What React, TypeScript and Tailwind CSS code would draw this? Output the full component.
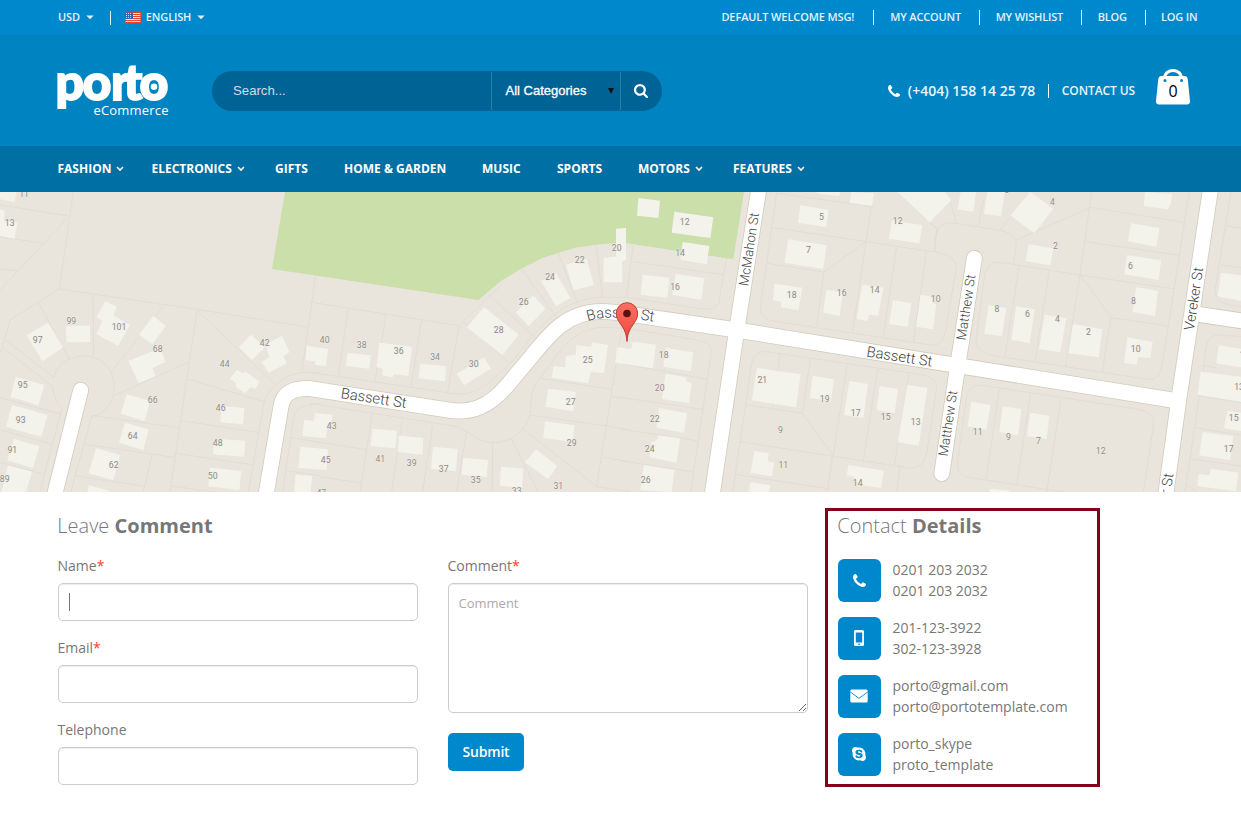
import React from "react";
import { FaSkype } from "react-icons/fa";

type MapLabel = [string, number, number];
type Tile = { x: number; lots: string[]; buildings: string[]; labels: MapLabel[] };

// Every tile is drawn at three times its size on the page.
const tiles: Tile[] = [
  {
    x: 0,
    lots: [
      "M0,45 L205,78", "M220,6 L178,297 L30,390 L14,448 L0,490", "M178,297 L592,358 L922,411", "M0,300 L205,82",
      "M0,140 L130,160", "M0,237 L52,243", "M117,340 L208,508", "M279,312 L281,500", "M490,348 L335,545",
      "M592,358 L568,515 L510,906", "M568,515 L342,617", "M592,362 L825,583", "M562,567 L792,635", "M947,258 L905,545",
      "M14,448 L162,563", "M8,472 L158,590",
      "M162,563 C170,520 210,498 256,498 C310,500 343,545 343,590 C343,640 310,675 275,680 L225,860 L212,906",
      "M158,590 C162,625 172,640 185,658 L150,790 L120,906", "M0,623 L182,672", "M0,720 L155,762", "M0,817 L130,852",
      "M275,676 L535,713", "M255,763 L523,802", "M228,858 L430,888", "M456,795 L430,906", "M543,692 L778,728",
      "M527,790 L762,825", "M513,888 L745,920", "M960,547 L905,547 C850,555 800,600 792,640 L745,906",
      "M960,640 L925,645 C890,650 885,670 880,690 L848,906", "M872,743 L960,757", "M866,843 L960,857",
    ],
    buildings: [
      "0,6 50,6 44,36 0,28", "0,58 14,62 12,92 52,98 44,146 0,138", "80,436 144,398 190,472 128,514",
      "198,408 270,407 271,456 199,457", "316,334 351,350 339,376 389,404 355,468 289,432 307,394 290,380",
      "460,378 498,408 457,462 417,434", "385,513 455,485 484,480 496,516 457,534 467,558 416,580",
      "47,561 133,585 115,646 32,621", "36,645 142,675 124,740 18,710", "42,747 118,769 99,834 22,811",
      "24,826 96,845 78,906 4,906", "380,613 450,633 434,693 362,671", "375,698 446,718 430,780 357,758",
      "288,775 361,795 340,870 266,850", "267,886 328,902 326,906 262,906", "753,434 795,472 756,510 717,472",
      "797,464 846,437 868,487 850,498 861,520 806,548 785,516 808,502",
      "710,540 728,550 736,545 778,574 766,597 752,592 735,610 707,590 708,578 690,566",
      "664,648 733,654 729,703 661,697", "643,746 736,752 732,800 639,793", "630,833 724,843 718,901 625,889",
      "920,467 984,477 978,529 945,524 946,514 917,511",
      "945,669 998,675 992,700 982,702 978,745 908,738 912,690 942,693", "901,770 984,778 980,840 895,834",
      "887,854 936,858 932,906 882,906",
    ],
    labels: [
      ["11", 72, 11], ["13", 29, 100], ["99", 214, 394], ["97", 113, 451], ["101", 357, 411], ["68", 473, 478],
      ["44", 674, 522], ["42", 794, 460], ["95", 68, 586], ["93", 62, 691], ["91", 37, 781], ["89", 14, 868],
      ["66", 458, 631], ["64", 398, 739], ["62", 341, 826], ["46", 662, 655], ["48", 653, 760], ["50", 638, 859],
    ],
  },
  {
    x: 310,
    lots: [
      "M5,337 L447,407 L412,610", "M115,355 L85,558", "M228,373 L195,575", "M335,388 L303,592", "M447,407 L575,283",
      "M462,397 L598,520", "M543,320 L670,438", "M635,237 L738,380", "M745,190 L803,340", "M858,166 L878,322",
      "M0,547 L440,612 C500,615 540,580 600,520 C680,430 730,330 875,322 L950,322",
      "M0,640 L430,708 C480,720 500,757 548,758 C600,757 645,730 660,670 C665,620 660,600 690,565 C740,500 780,415 880,412 L945,415",
      "M690,565 L905,598", "M935,415 L860,890", "M660,675 L890,708 L960,720", "M905,620 L960,626",
      "M640,718 L860,890 L960,905", "M603,745 L685,906", "M548,758 L547,906", "M470,722 L440,906", "M368,705 L338,906",
      "M277,688 L245,906", "M187,672 L150,906", "M30,757 L168,779", "M30,860 L152,879", "M878,802 L960,815",
    ],
    buildings: [
      "112,488 182,496 178,536 107,527", "208,458 306,470 295,558 251,552 248,562 216,556 218,536 200,532",
      "330,521 408,529 405,574 326,565", "440,551 523,502 542,536 462,586", "522,352 626,434 577,496 471,412",
      "670,316 706,356 656,408 617,368", "693,274 738,250 782,324 738,348", "768,224 830,206 852,284 790,301",
      "918,116 948,114 948,210 936,214 937,277 881,277 881,203 918,200",
      "846,457 894,465 882,549 842,546 835,580 725,563 731,529 766,532 768,497 797,494 799,466 844,470",
      "714,596 797,606 790,664 707,650", "705,694 793,706 789,756 700,744", "678,778 742,829 714,868 645,817",
      "187,716 261,723 256,775 182,768", "267,737 340,744 337,794 263,786", "369,770 443,777 438,844 363,836",
      "459,803 534,810 530,861 455,854", "573,830 640,836 636,893 569,887",
    ],
    labels: [
      ["40", 44, 450], ["38", 155, 465], ["36", 266, 484], ["34", 375, 501], ["30", 491, 522], ["28", 566, 420],
      ["26", 641, 336], ["24", 720, 261], ["22", 809, 210], ["20", 920, 175], ["25", 833, 510], ["27", 782, 636],
      ["29", 785, 760], ["31", 745, 888], ["33", 620, 904], ["35", 497, 870], ["37", 401, 837], ["39", 305, 820],
      ["41", 211, 807], ["45", 47, 811], ["43", 65, 709], ["47", 34, 908],
    ],
  },
  {
    x: 620,
    lots: [
      "M470,6 L421,350 C425,385 440,390 465,394 L900,460 L930,465", "M455,112 L738,155 L930,184",
      "M755,45 L738,155 L612,246 L440,220", "M612,246 L590,410", "M470,10 L760,50", "M738,155 L697,430",
      "M830,168 L790,440", "M920,182 L880,455", "M930,100 L950,115 L945,185",
      "M39,167 L20,322 L240,356 C290,362 298,350 302,300 L320,205", "M39,215 L310,254",
      "M0,412 L220,448 C270,455 278,470 272,500 L212,906", "M0,520 L263,568", "M0,622 L247,658", "M0,717 L232,752",
      "M0,812 L217,845",
      "M338,906 L395,520 C405,485 420,480 460,488 L900,553 C945,560 955,580 948,610 L920,790 C910,830 890,838 860,833 L358,755",
      "M380,645 L547,670 L638,795 L622,906", "M480,492 L458,655", "M572,503 L547,670", "M682,520 L640,795",
      "M773,537 L730,812", "M867,550 L823,825", "M345,853 L630,897", "M840,830 L830,906",
    ],
    buildings: [
      "38,455 108,464 99,535 -14,518 -9,472 34,477", "55,24 120,32 115,84 51,77", "163,65 280,82 271,144 155,128",
      "188,156 268,168 260,223 181,209", "68,254 148,263 142,323 62,314", "168,252 253,265 244,330 157,314",
      "137,474 220,487 212,544 130,530", "137,551 199,562 198,574 215,579 207,640 126,627",
      "117,655 201,669 192,728 109,713", "116,736 180,745 170,818 88,802 94,756 110,752",
      "72,825 163,840 155,906 61,900", "585,6 660,6 657,18 600,12", "694,6 762,10 756,48 689,38",
      "541,46 625,59 619,111 534,98", "504,148 620,166 609,237 494,218",
      "463,281 547,293 535,361 483,352 484,336 459,330", "619,299 669,307 659,378 610,368",
      "727,284 790,293 775,377 747,374 742,393 710,387", "818,331 874,339 863,410 808,402",
      "902,314 935,320 937,340 949,342 939,418 888,410", "815,92 907,105 898,160 807,146",
      "833,6 975,6 994,30 929,97", "411,534 542,553 528,652 395,631", "578,558 642,568 633,633 569,624",
      "688,573 744,582 730,684 672,675", "779,588 834,597 824,670 770,661", "862,584 922,594 896,767 833,756",
      "403,784 446,789 443,814 463,818 456,859 392,849", "391,876 451,886 448,906 387,906",
      "685,825 791,842 783,894 718,884 700,860 681,856",
    ],
    labels: [
      ["12", 194, 97], ["14", 180, 190], ["16", 165, 291], ["18", 131, 495], ["20", 119, 594], ["22", 104, 687],
      ["24", 89, 777], ["26", 77, 871], ["21", 427, 570], ["19", 614, 627], ["17", 707, 670], ["15", 797, 681],
      ["13", 887, 696], ["9", 481, 720], ["11", 490, 825], ["14", 713, 880], ["5", 604, 82], ["7", 565, 180],
      ["18", 515, 316], ["16", 665, 309], ["14", 764, 300], ["10", 947, 327], ["12", 833, 94],
    ],
  },
  {
    x: 930,
    lots: [
      "M485,6 L450,255 L543,380 L517,545", "M260,150 L482,52 L762,97", "M208,122 L242,80", "M62,40 L80,100",
      "M160,30 L145,110",
      "M778,6 L697,520 C690,560 680,572 640,566 L200,498 C150,490 135,470 138,450 L165,250 C175,215 190,215 230,220 L450,255 L735,297",
      "M467,155 L748,196", "M543,383 L715,408", "M267,228 L225,500", "M358,240 L315,515", "M450,255 L407,530",
      "M14,180 L15,150 C25,100 40,97 75,100 L205,120 C255,130 262,150 257,180 L250,220", "M0,95 L22,118",
      "M0,183 C50,190 80,200 78,240 L50,400 C45,440 40,468 0,466",
      "M400,906 L147,867 C115,862 78,860 82,820 L110,620 C120,585 140,583 170,588 L620,657 C660,665 675,680 670,710 L640,906",
      "M208,598 L168,868", "M302,610 L260,885", "M393,625 L350,906", "M903,6 L855,300 C860,340 880,342 933,350",
      "M890,108 L933,114", "M872,225 L933,233", "M933,440 L860,435 C825,440 828,480 820,540 L765,906",
      "M820,527 L860,533", "M805,618 L933,638", "M792,713 L933,735", "M778,806 L933,828", "M768,882 L800,906",
    ],
    buildings: [
      "92,6 138,6 130,66 83,58", "172,6 224,6 213,79 162,71", "301,6 370,56 313,130 242,76",
      "296,163 370,175 361,226 287,213", "645,6 727,12 721,46 713,58 641,48", "603,100 688,114 679,170 594,154",
      "591,196 693,211 686,270 583,253", "619,292 684,303 675,378 608,366",
      "592,442 668,456 661,504 625,501 619,524 582,519", "176,346 229,354 216,439 163,431",
      "259,349 314,358 299,459 244,450", "344,374 409,385 391,487 327,477", "429,402 517,418 506,502 415,489",
      "124,635 182,645 169,719 113,709", "218,649 274,657 264,736 208,726", "301,668 358,677 350,747 291,738",
      "873,248 933,256 933,332 863,319", "866,466 933,476 933,532 859,520", "812,545 933,560 933,635 803,614",
      "893,662 933,668 933,723 882,715", "818,726 909,739 901,811 808,796",
      "843,836 925,848 918,904 802,888 806,852 838,856", "178,896 240,902 240,906 178,906",
    ],
    labels: [
      ["4", 367, 37], ["2", 376, 168], ["6", 601, 229], ["8", 610, 333], ["10", 617, 477], ["8", 201, 358],
      ["6", 292, 373], ["4", 382, 388], ["2", 475, 427], ["11", 143, 726], ["9", 235, 741], ["7", 325, 753],
      ["12", 512, 783], ["15", 911, 685], ["17", 896, 777], ["13", 927, 591], ["11", 943, 496], ["6", 230, 0],
    ],
  },
];

const roads = [
  "M265.8,496 L281.2,405 C283.5,393.5 293,387.5 310,388.6 L448,410 C472,414 490,406 508,384.5 L531,357 C549,335 566,312 601,311.5 C613,311.5 625,313.3 637.3,315.3 L736.7,330 L1175,400.5",
  "M759,188 L736.7,330 L712,496",
  "M974.3,258.3 L957.7,366 L941.8,473.5",
  "M1210.7,188 L1179.3,396 L1165.5,496",
  "M1194,313.7 L1246,321.5",
  "M80.7,390.2 L54.3,496",
];

const streetLabels: { text: string; x: number; y: number; angle: number; size: number; anchor: "middle" | "end" }[] = [
  { text: "Bassett St", x: 373, y: 403, angle: 8.5, size: 14.8, anchor: "middle" },
  { text: "Bassett St", x: 898.8, y: 361.5, angle: 8.8, size: 14.8, anchor: "middle" },
  { text: "McMahon St", x: 753.5, y: 250, angle: -81.5, size: 13.2, anchor: "middle" },
  { text: "Matthew St", x: 970.5, y: 308, angle: -81.5, size: 13.2, anchor: "middle" },
  { text: "Matthew St", x: 952.5, y: 424, angle: -81.5, size: 13.2, anchor: "middle" },
  { text: "Vereker St", x: 1198.5, y: 299.5, angle: -81.5, size: 14.3, anchor: "middle" },
  { text: "Vereker St", x: 1173.5, y: 474, angle: -81.5, size: 14.3, anchor: "end" },
];

function StreetMap() {
  return (
    <svg viewBox="0 192 1241 300" className="block h-[300px] w-[1241px] bg-[#e9e5dc]" style={{ fontFamily: "Roboto, sans-serif" }}>
      <polygon
        points="285,192 272,269 478.3,300 501.7,280.5 521.7,268.5 543,257.8 575,247.8 601.7,244 620,243.2 627,243.3 733.3,259.3 744,192"
        fill="#cadfaa"
      />
      {tiles.map((t) => (
        <g key={t.x} transform={`translate(${t.x} 190) scale(0.33333)`}>
          {t.lots.map((d, i) => (
            <path key={i} d={d} fill="none" stroke="#e1dcd4" strokeWidth={2.8} />
          ))}
        </g>
      ))}
      {tiles.map((t) => (
        <g key={t.x} transform={`translate(${t.x} 190) scale(0.33333)`} fill="#f3f3ec">
          {t.buildings.map((p, i) => (
            <polygon key={i} points={p} />
          ))}
        </g>
      ))}
      <g fill="none" strokeLinecap="round" strokeLinejoin="round">
        {roads.map((d) => (
          <path key={d} d={d} stroke="#d3cbbd" strokeWidth={16.6} />
        ))}
        {roads.map((d) => (
          <path key={d} d={d} stroke="#ffffff" strokeWidth={15} />
        ))}
      </g>
      {tiles.map((t) => (
        <g
          key={t.x}
          transform={`translate(${t.x} 190) scale(0.33333)`}
          fill="#8f8c88"
          fontSize={26}
          textAnchor="middle"
          stroke="#f0ede6"
          strokeWidth={3}
          paintOrder="stroke"
        >
          {t.labels.map(([n, x, y], i) => (
            <text key={i} x={x} y={y + 9}>
              {n}
            </text>
          ))}
        </g>
      ))}
      <g fill="#444444" fontWeight={300}>
        {streetLabels.map((s, i) => (
          <text key={i} fontSize={s.size} textAnchor={s.anchor} transform={`translate(${s.x} ${s.y}) rotate(${s.angle})`}>
            {s.text}
          </text>
        ))}
        <path id="bend" d="M588,321 C606,315 632,317 665,324" fill="none" />
        <text fontSize={14.8}>
          <textPath href="#bend">Bassett St</textPath>
        </text>
      </g>
      <defs>
        <linearGradient id="pin" x1="0" y1="0" x2="0" y2="1">
          <stop offset="0" stopColor="#fb7064" />
          <stop offset="1" stopColor="#f0453a" />
        </linearGradient>
      </defs>
      <path
        d="M627,341.5 C626.3,331 622.5,327 619.5,322.5 C617.5,319.5 616.3,317 616.3,313.4 A10.7,10.7 0 0 1 637.7,313.4 C637.7,317 636.5,319.5 634.5,322.5 C631.5,327 627.7,331 627,341.5 Z"
        fill="url(#pin)"
        stroke="#b0352d"
        strokeWidth={0.9}
      />
      <circle cx={627} cy={313.5} r={3.8} fill="#5c120e" />
    </svg>
  );
}

const phonePath =
  "M1600 1240q0 27-10 70.5t-21 68.5q-21 50-122 106-94 51-186 51-27 0-53-3.5t-57.5-12.5-47-14.5-55.5-20.5-49-18q-98-35-175-83-127-79-264-216t-216-264q-48-77-83-175-3-9-18-49t-20.5-55.5-14.5-47-12.5-57.5-3.5-53q0-92 51-186 56-101 106-122 25-11 68.5-21t70.5-10q14 0 21 3 18 6 53 76 11 19 30 54t35 63.5 31 53.5q3 4 17.5 25t21.5 35.5 7 28.5q0 20-28.5 50t-62 55-62 53-28.5 46q0 9 5 22.5t8.5 20.5 14 24 11.5 19q76 137 174 235t235 174q2 1 19 11.5t24 14 20.5 8.5 22.5 5q18 0 46-28.5t53-62 55-62 50-28.5q14 0 28.5 7t35.5 21.5 25 17.5q25 15 53.5 31t63.5 35 54 30q70 35 76 53 3 7 3 21z";
const searchPath =
  "M1216 832q0-185-131.5-316.5t-316.5-131.5-316.5 131.5-131.5 316.5 131.5 316.5 316.5 131.5 316.5-131.5 131.5-316.5zm512 832q0 52-38 90t-90 38q-54 0-90-38l-343-342q-179 124-399 124-143 0-273.5-55.5t-225-150-150-225-55.5-273.5 55.5-273.5 150-225 225-150 273.5-55.5 273.5 55.5 225 150 150 225 55.5 273.5q0 220-124 399l343 343q37 37 37 90z";

function PhoneIcon({ className }: { className: string }) {
  return (
    <svg viewBox="192 128 1408 1408" className={className} fill="currentColor">
      <path d={phonePath} />
    </svg>
  );
}

function Caret() {
  return (
    <svg viewBox="0 0 8 5" className="h-[5px] w-2" fill="currentColor">
      <path d="M0.3 0.4h7.4L4 4.3z" />
    </svg>
  );
}

function Flag() {
  return (
    <svg viewBox="0 0 16 11" className="h-[11px] w-4">
      <rect width="16" height="11" fill="#f7dcd6" />
      {[0, 2, 4, 6, 8, 10].map((y) => (
        <rect key={y} y={y} width="16" height="1" fill="#e8442e" />
      ))}
      <rect width="8" height="7" fill="#2f62c4" />
      {[1.5, 3.5, 5.5].map((y) => (
        <path key={y} d={`M1 ${y}h6`} stroke="#dce6fa" strokeWidth="0.9" strokeDasharray="1 1" />
      ))}
      <rect x="0.5" y="0.5" width="15" height="10" fill="none" stroke="#d8402d" strokeOpacity="0.6" />
    </svg>
  );
}

function Logo() {
  return (
    <svg viewBox="0 0 114 54" className="h-[54px] w-[114px] shrink-0 overflow-visible" fill="#ffffff">
      <text
        x="-2.5 24.5 53 65.500 81.500"
        y="35.500"
        fontFamily="Lato, sans-serif"
        fontWeight={900}
        fontSize="50"
        stroke="#ffffff"
        strokeWidth="1.800"
      >
        porto
      </text>
      <circle cx="96" cy="22.800" r="3.300" />
      <text x="35.500" y="50.500" fontFamily="'Open Sans', sans-serif" fontSize="13" textLength="75">
        eCommerce
      </text>
    </svg>
  );
}

function Bag() {
  return (
    <div className="relative ml-[21px] h-[36px] w-[34px]">
      <svg viewBox="0 0 34 36" className="h-[36px] w-[34px]">
        <path d="M8.5 9.5C8.5 -1.2 25.5 -1.2 25.5 9.5" fill="none" stroke="#fff" strokeWidth="3" />
        <path d="M5.5 7H28.500Q31.300 7 31.700 10L34 32Q34.200 35.500 31 35.500H3Q-.2 35.500 0 32L2.300 10Q2.700 7 5.500 7Z" fill="#fff" />
        <path d="M10.500 7Q17 1.500 23.500 7Z" fill="#0083c1" />
        <circle cx="9" cy="11.500" r="1.500" fill="#0083c1" />
        <circle cx="25.500" cy="11.500" r="1.500" fill="#0083c1" />
      </svg>
      <span className="absolute inset-x-0 top-[12px] text-center text-[16px] leading-5 text-black">0</span>
    </div>
  );
}

const nav: { label: string; width: string; menu?: boolean }[] = [
  { label: "FASHION", width: "w-[94px]", menu: true },
  { label: "ELECTRONICS", width: "w-[123.500px]", menu: true },
  { label: "GIFTS", width: "w-[69px]" },
  { label: "HOME & GARDEN", width: "w-[138px]" },
  { label: "MUSIC", width: "w-[75px]" },
  { label: "SPORTS", width: "w-[81px]" },
  { label: "MOTORS", width: "w-[95px]", menu: true },
  { label: "FEATURES", width: "w-[90px]", menu: true },
];

function Field({ label, required, focused }: { label: string; required?: boolean; focused?: boolean }) {
  return (
    <label className="block h-[82px]">
      <span className="-ml-[0.500px] block h-[28px] text-[14px] leading-[21px]">
        {label}
        {required && <span className="text-[#ff3b2b]">*</span>}
      </span>
      <span className="flex h-[38px] items-center rounded-[5px] border border-[#cccccc] px-[10px] shadow-[inset_0_1px_1px_rgba(0,0,0,0.075)]">
        {focused && <span className="h-[18px] w-px bg-[#777]" />}
        <input className="min-w-0 flex-1 bg-transparent outline-none" />
      </span>
    </label>
  );
}

function Detail({ icon, lines }: { icon: React.ReactNode; lines: [string, string] }) {
  return (
    <div className="flex h-[58px] gap-[11.500px]">
      <div className="flex size-[43px] items-center justify-center rounded-[6px] bg-[#0088cc] pr-px pb-px text-white">{icon}</div>
      <div className="text-[14px] leading-[21px]">
        <div>{lines[0]}</div>
        <div>{lines[1]}</div>
      </div>
    </div>
  );
}

export default function App() {
  return (
    <div className="h-[814px] w-[1241px] overflow-hidden bg-white font-['Open_Sans',sans-serif] text-[#777777]">
      <div className="flex h-[35px] items-center justify-between bg-[#0088cc] pr-[43.500px] pl-[58px] text-[11px] font-semibold tracking-[-0.150px] text-[#e2f2fb]">
        <div className="flex items-center">
          <span>USD</span>
          <span className="ml-[6px]"><Caret /></span>
          <span className="ml-4 h-[14px] w-px bg-[#e2f2fb]" />
          <span className="ml-[14px]"><Flag /></span>
          <span className="ml-[5px]">ENGLISH</span>
          <span className="ml-[6px]"><Caret /></span>
        </div>
        <div className="flex items-center">
          <span className="tracking-[-0.110px]">DEFAULT WELCOME MSG!</span>
          <span className="mr-4 ml-[19px] h-[15px] w-px bg-[#e2f2fb]" />
          <span>MY ACCOUNT</span>
          <span className="mr-4 ml-[17.500px] h-[15px] w-px bg-[#e2f2fb]" />
          <span>MY WISHLIST</span>
          <span className="mr-4 ml-[17.500px] h-[15px] w-px bg-[#e2f2fb]" />
          <span>BLOG</span>
          <span className="mr-[15px] ml-[18px] h-[15px] w-px bg-[#e2f2fb]" />
          <span>LOG IN</span>
        </div>
      </div>

      <div className="flex h-[111px] items-center bg-[#0083c1] pr-[51px] pl-[58px] text-[#e9f5fc]">
        <Logo />
        <div className="ml-10 flex h-10 w-[450px] items-center rounded-full bg-[#006395] font-['Liberation_Sans',Arial,sans-serif] text-[13px]">
          <span className="w-[279px] pl-[21px] text-[13.200px] text-[#d3dde4]">Search...</span>
          <span className="h-[38px] w-px bg-[#2a7fab]" />
          <span className="flex w-[128px] items-center justify-between pt-px pr-[6px] pl-[13.500px] text-white [-webkit-text-stroke:0.3px_white]">
            All Categories
            <svg viewBox="0 0 6 6" className="size-[6px]" fill="#111">
              <path d="M0 0h6L3 6z" />
            </svg>
          </span>
          <span className="h-[38px] w-px bg-[#2a7fab]" />
          <svg viewBox="64 128 1664 1664" className="ml-[13px] size-[14px]" fill="#fff">
            <path d={searchPath} />
          </svg>
        </div>
        <div className="ml-auto flex items-center">
          <PhoneIcon className="size-3 text-white" />
          <span className="ml-2 text-[14px] font-semibold">(+404) 158 14 25 78</span>
          <span className="mr-[13px] ml-[12.500px] h-[14px] w-px bg-white" />
          <span className="text-[12px] font-semibold tracking-[-0.100px]">CONTACT US</span>
          <div className="-mt-2"><Bag /></div>
        </div>
      </div>

      <div className="flex h-[46px] items-center bg-[#006fa4] pl-[57.500px] text-[12px] font-bold text-white">
        {nav.map((n) => (
          <div key={n.label} className={`flex shrink-0 items-center whitespace-nowrap ${n.width}`}>
            {n.label}
            {n.menu && (
              <svg viewBox="0 0 8 6" className="ml-[5px] h-[6px] w-2">
                <path d="M1 1l3 3 3-3" fill="none" stroke="#fff" strokeWidth="1.600" />
              </svg>
            )}
          </div>
        ))}
      </div>

      <StreetMap />

      <div className="flex pl-[58px]">
        <div className="w-[360px] pt-[22px]">
          <h2 className="-ml-[0.700px] h-[41px] text-[20px] leading-6 font-light">
            Leave <span className="font-bold">Comment</span>
          </h2>
          <Field label="Name" required focused />
          <Field label="Email" required />
          <Field label="Telephone" />
        </div>
        <div className="ml-[30px] w-[360px] pt-[63px]">
          <div className="-ml-[0.500px] h-[28px] text-[14px] leading-[21px]">
            Comment<span className="text-[#ff3b2b]">*</span>
          </div>
          <textarea
            placeholder="Comment"
            className="block h-[130px] w-full resize rounded-[5px] border border-[#cccccc] px-[9.500px] py-[9px] text-[13px] leading-5 shadow-[inset_0_1px_1px_rgba(0,0,0,0.075)] placeholder:text-[#aaaaaa]"
          />
          <button className="mt-5 h-[38px] w-[76px] rounded-[5px] bg-[#0088cc] pb-[2px] text-[14px] font-semibold tracking-[-0.200px] text-white">
            Submit
          </button>
        </div>
        <div className="mt-4 ml-[17px] h-[279px] w-[275px] border-[3px] border-[#85001a] pt-[3px] pl-[10px]">
          <h2 className="-ml-[0.700px] h-[45px] text-[20px] leading-6 font-light">
            Contact <span className="font-bold">Details</span>
          </h2>
          <Detail icon={<PhoneIcon className="size-[13px]" />} lines={["0201 203 2032", "0201 203 2032"]} />
          <Detail
            icon={
              <svg viewBox="0 0 10 16" className="h-4 w-[10px]">
                <path
                  fill="#fff"
                  fillRule="evenodd"
                  d="M1.500 0h7Q10 0 10 1.500v13Q10 16 8.500 16h-7Q0 16 0 14.500v-13Q0 0 1.500 0ZM1.800 2.500v10h6.400v-10ZM5 13.500a.8.8 0 1 0 .01 0Z"
                />
              </svg>
            }
            lines={["201-123-3922", "302-123-3928"]}
          />
          <Detail
            icon={
              <svg viewBox="0 0 18 14" className="h-[14px] w-[18px]">
                <rect x="0.300" y="0.500" width="17.400" height="13" rx="1.500" fill="#fff" />
                <path d="M0.300 3L9 9.300L17.700 3" fill="none" stroke="#0088cc" strokeWidth="0.900" />
              </svg>
            }
            lines={["porto@gmail.com", "porto@portotemplate.com"]}
          />
          <Detail icon={<FaSkype className="size-4" />} lines={["porto_skype", "proto_template"]} />
        </div>
      </div>
    </div>
  );
}
